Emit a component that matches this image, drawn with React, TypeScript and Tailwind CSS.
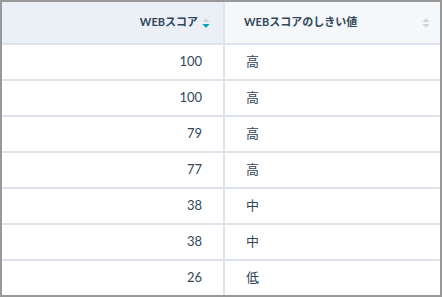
import React from 'react';

// スコア一覧
const rows = [
  { score: 100, level: '高' },
  { score: 100, level: '高' },
  { score: 79, level: '高' },
  { score: 77, level: '高' },
  { score: 38, level: '中' },
  { score: 38, level: '中' },
  { score: 26, level: '低' },
];

const SortIcon = ({ active }: { active?: boolean }) => (
  <svg width="8" height="12" viewBox="0 0 8 12" className="shrink-0">
    <path d="M4 1 L7.5 5 L0.5 5 Z" fill="#cbd6e2" />
    <path d="M4 11 L7.5 7 L0.5 7 Z" fill={active ? '#00a4bd' : '#cbd6e2'} />
  </svg>
);

const App = () => {
  return (
    <div
      className="w-[442px] h-[297px] border-2 border-[#999999] bg-white overflow-hidden text-[#33475b]"
      style={{ fontFamily: 'Lato, "Noto Sans CJK JP", sans-serif' }}
    >
      {/* ヘッダー */}
      <div className="flex h-[43px] border-b-2 border-[#dfe3eb]">
        <div className="w-[223px] shrink-0 bg-[#eaf0f6] border-r-2 border-[#dfe3eb] flex items-center justify-end gap-[4px] pr-[13px] text-[11px] font-bold">
          <span>WEBスコア</span>
          <SortIcon active />
        </div>
        <div className="flex-1 bg-[#f5f8fa] flex items-center justify-between pl-[19px] pr-[10px] text-[11px] font-bold">
          <span>WEBスコアのしきい値</span>
          <SortIcon />
        </div>
      </div>

      {/* 行 */}
      {rows.map((r, i) => (
        <div
          key={i}
          className={`flex text-[13px] ${i < rows.length - 1 ? 'h-[36px] border-b-2 border-[#dfe3eb]' : 'h-[34px]'}`}
        >
          <div className="w-[223px] shrink-0 border-r-2 border-[#dfe3eb] flex items-center justify-end pr-[21px]">
            {r.score}
          </div>
          <div className="flex-1 flex items-center pl-[21px]">{r.level}</div>
        </div>
      ))}
    </div>
  );
};

export default App;
